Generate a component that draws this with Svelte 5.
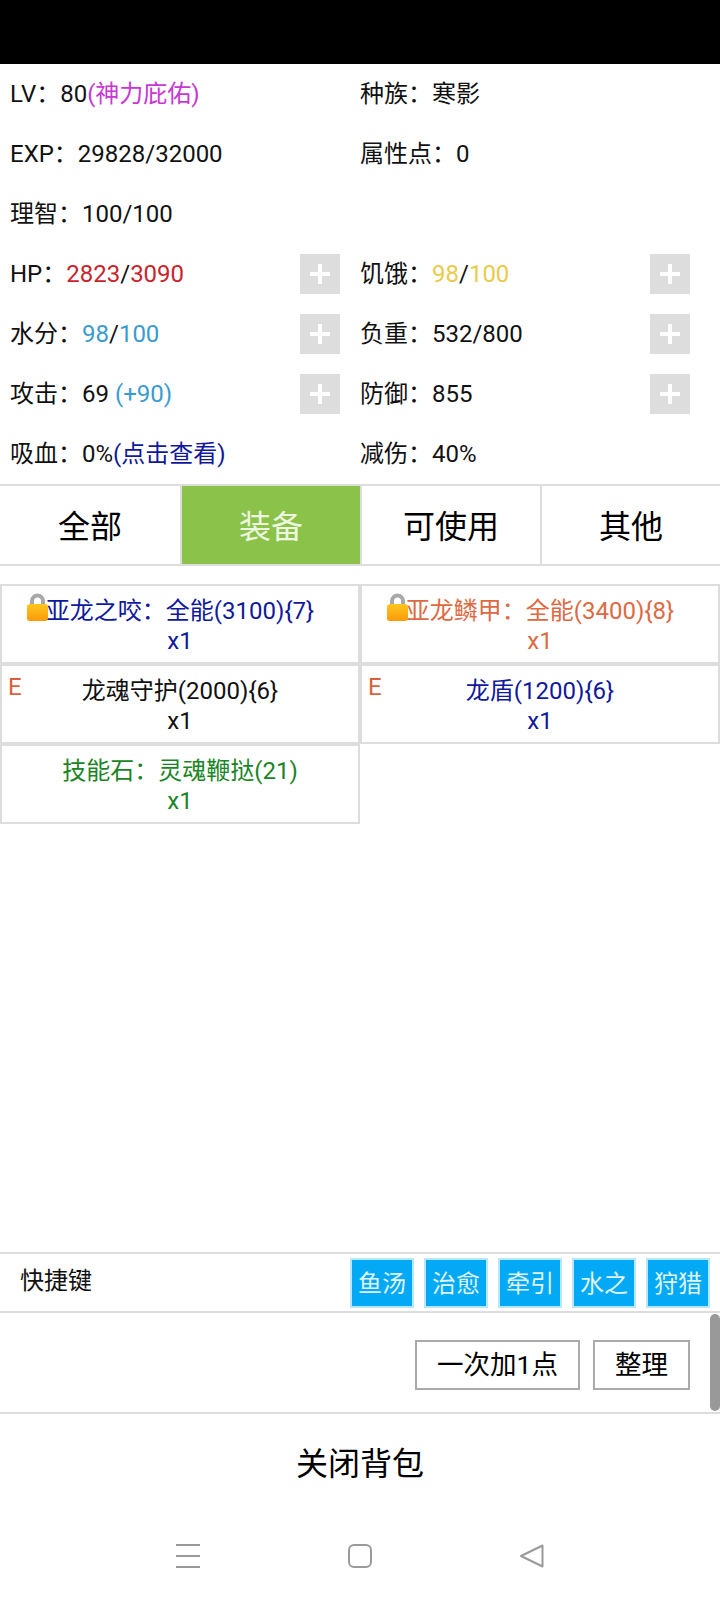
<script>
  const tabs = ["全部", "装备", "可使用", "其他"];
  const activeTab = "装备";

  const items = [
    { name: "亚龙之咬：全能(3100){7}", color: "blue", locked: true },
    { name: "亚龙鳞甲：全能(3400){8}", color: "orange", locked: true },
    { name: "龙魂守护(2000){6}", color: "black", equipped: true },
    { name: "龙盾(1200){6}", color: "blue", equipped: true },
    { name: "技能石：灵魂鞭挞(21)", color: "green" },
  ];

  const shortcuts = ["鱼汤", "治愈", "牵引", "水之", "狩猎"];
</script>

{#snippet plus()}
  <button class="plus" aria-label="加点">
    <svg width="20" height="20" viewBox="0 0 20 20"><path d="M8 0h4v8h8v4h-8v8H8v-8H0V8h8z" fill="#fff" /></svg>
  </button>
{/snippet}

<div class="page">
  <div class="statusbar"></div>

  <div class="stats">
    <div class="stat"><span class="txt">LV：80<span class="magenta">(神力庇佑)</span></span></div>
    <div class="stat"><span class="txt">种族：寒影</span></div>
    <div class="stat"><span class="txt">EXP：29828/32000</span></div>
    <div class="stat"><span class="txt">属性点：0</span></div>
    <div class="stat"><span class="txt">理智：100/100</span></div>
    <div class="stat"></div>
    <div class="stat"><span class="txt">HP：<span class="red">2823</span>/<span class="red">3090</span></span>{@render plus()}</div>
    <div class="stat"><span class="txt">饥饿：<span class="yellow">98</span>/<span class="yellow">100</span></span>{@render plus()}</div>
    <div class="stat"><span class="txt">水分：<span class="sky">98</span>/<span class="sky">100</span></span>{@render plus()}</div>
    <div class="stat"><span class="txt">负重：532/800</span>{@render plus()}</div>
    <div class="stat"><span class="txt">攻击：69 <span class="sky">(+90)</span></span>{@render plus()}</div>
    <div class="stat"><span class="txt">防御：855</span>{@render plus()}</div>
    <div class="stat"><span class="txt">吸血：0%<span class="blue">(点击查看)</span></span></div>
    <div class="stat"><span class="txt">减伤：40%</span></div>
  </div>

  <div class="tabs">
    {#each tabs as tab}
      <div class="tab" class:active={tab === activeTab}>{tab}</div>
    {/each}
  </div>

  <div class="items">
    {#each items as item}
      <div class="item {item.color}">
        {#if item.locked}
          <svg class="lock" width="22" height="28" viewBox="0 0 22 28">
            <defs>
              <linearGradient id="lockbody" x1="0" y1="0" x2="0" y2="1">
                <stop offset="0" stop-color="#ffc61f" />
                <stop offset="1" stop-color="#fa9a08" />
              </linearGradient>
            </defs>
            <path d="M5 13V8a5.5 5.5 0 0 1 11 0v5" fill="none" stroke="#a8a8a8" stroke-width="4" />
            <rect x="0" y="11" width="21" height="17" rx="3" fill="url(#lockbody)" />
          </svg>
        {/if}
        {#if item.equipped}
          <span class="equipped">E</span>
        {/if}
        <div>{item.name}</div>
        <div>x1</div>
      </div>
    {/each}
  </div>

  <div class="shortcuts">
    <span class="shortcuts-label">快捷键</span>
    <div class="shortcut-list">
      {#each shortcuts as s}
        <div class="shortcut">{s}</div>
      {/each}
    </div>
  </div>

  <div class="actions">
    <button class="action wide">一次加1点</button>
    <button class="action narrow">整理</button>
    <div class="scrollbar"></div>
  </div>

  <div class="close">关闭背包</div>

  <div class="navbar">
    <svg width="24" height="24" viewBox="0 0 24 24" fill="none" stroke="#9a9a9a" stroke-width="2">
      <path d="M0 1h24M0 12h24M0 23h24" />
    </svg>
    <svg width="24" height="24" viewBox="0 0 24 24" fill="none" stroke="#9a9a9a" stroke-width="2">
      <rect x="1" y="1" width="22" height="22" rx="5" />
    </svg>
    <svg width="24" height="24" viewBox="0 0 24 24" fill="none" stroke="#9a9a9a" stroke-width="2" stroke-linejoin="round">
      <path d="M22.5 1.5v21L1 12z" />
    </svg>
  </div>
</div>

<style>
  :global(body) {
    background: #fff;
  }

  .page {
    width: 720px;
    height: 1600px;
    display: flex;
    flex-direction: column;
    font-family: Roboto, "Noto Sans CJK SC", sans-serif;
    font-size: 24px;
    color: #111;
    background: #fff;
  }

  .statusbar {
    height: 64px;
    background: #000;
  }

  .stats {
    display: grid;
    grid-template-columns: 350px 350px;
    grid-auto-rows: 60px;
    padding-right: 20px;
  }

  .stat {
    display: flex;
    align-items: center;
    justify-content: space-between;
    padding: 0 10px;
    white-space: pre;
  }

  .txt {
    margin-bottom: 6px;
  }

  .plus {
    width: 40px;
    height: 40px;
    padding: 0;
    border: none;
    background: #ddd;
    display: flex;
    align-items: center;
    justify-content: center;
  }

  .magenta { color: #c936d6; }
  .red { color: #c9242c; }
  .yellow { color: #e9cb4a; }
  .sky { color: #3a9bd0; }
  .stat .blue { color: #10189c; }

  .tabs {
    display: grid;
    grid-template-columns: repeat(4, 180px);
    border-top: 2px solid #ddd;
    border-bottom: 2px solid #ddd;
  }

  .tab {
    height: 78px;
    padding-bottom: 2px;
    box-sizing: border-box;
    border-left: 2px solid #ddd;
    display: flex;
    align-items: center;
    justify-content: center;
    font-size: 32px;
    color: #000;
  }

  .tab:first-child {
    border-left: none;
  }

  .tab.active {
    background: #8bc34a;
    color: #eef7e0;
  }

  .items {
    flex: 1;
    display: grid;
    grid-template-columns: 360px 360px;
    grid-auto-rows: 80px;
    padding-top: 18px;
  }

  .item {
    position: relative;
    box-sizing: border-box;
    border: 2px solid #ddd;
    padding-top: 10px;
    line-height: 30px;
    text-align: center;
  }

  .item.blue { color: #10189c; }
  .item.orange { color: #dd6a42; }
  .item.black { color: #111; }
  .item.green { color: #1a8526; }

  .lock {
    position: absolute;
    left: 25px;
    top: 7px;
  }

  .equipped {
    position: absolute;
    left: 6px;
    top: 6px;
    color: #d9603a;
  }

  .shortcuts {
    height: 57px;
    display: flex;
    align-items: center;
    justify-content: space-between;
    padding: 0 10px 0 20px;
    border-top: 2px solid #ddd;
    border-bottom: 2px solid #ddd;
  }

  .shortcuts-label {
    margin-bottom: 8px;
  }

  .shortcut-list {
    display: flex;
    gap: 10px;
  }

  .shortcut {
    width: 64px;
    height: 50px;
    padding-bottom: 2px;
    box-sizing: border-box;
    border: 2px solid #b8e6fb;
    background: #03a9f4;
    color: #dff4fe;
    display: flex;
    align-items: center;
    justify-content: center;
  }

  .actions {
    position: relative;
    height: 101px;
    display: flex;
    align-items: center;
    justify-content: flex-end;
    gap: 13px;
    padding: 4px 30px 0 0;
    box-sizing: border-box;
    border-bottom: 2px solid #ddd;
  }

  .action {
    height: 50px;
    padding: 0 0 4px;
    background: #fff;
    border: 2px solid #aaa;
    font: inherit;
    font-size: 26.5px;
    color: #000;
  }

  .action.wide { width: 165px; }
  .action.narrow { width: 97px; }

  .scrollbar {
    position: absolute;
    right: 0;
    top: 1px;
    width: 10px;
    height: 97px;
    border-radius: 5px;
    background: #999;
  }

  .close {
    height: 102px;
    padding-bottom: 8px;
    box-sizing: border-box;
    display: flex;
    align-items: center;
    justify-content: center;
    font-size: 32px;
    color: #000;
  }

  .navbar {
    height: 84px;
    padding: 28px 176px 0;
    box-sizing: border-box;
    display: flex;
    justify-content: space-between;
    align-items: flex-start;
  }
</style>
